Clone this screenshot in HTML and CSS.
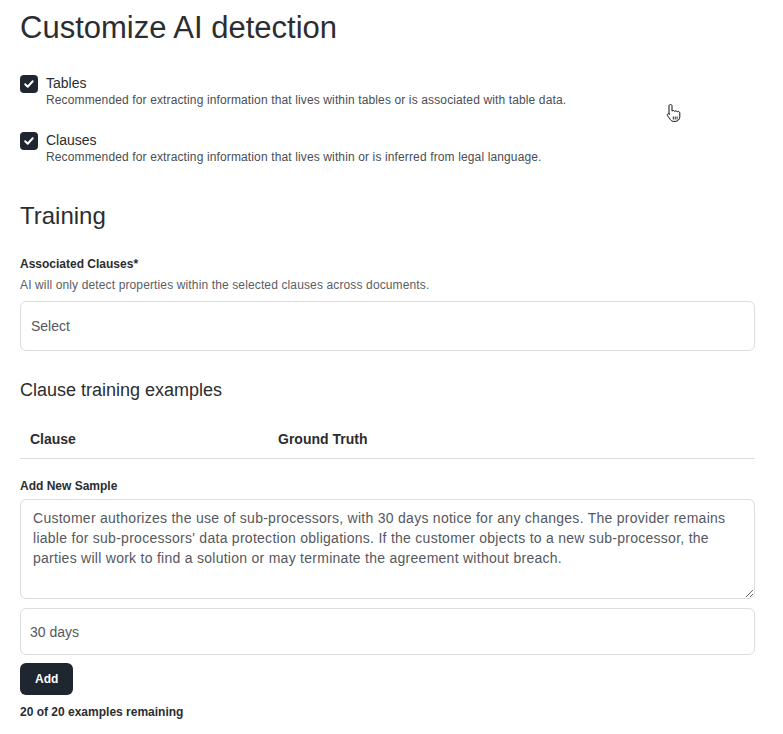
FILE: index.html
```html
<!DOCTYPE html>
<html>
<head>
  <title>Customize AI detection</title>
  <link rel="stylesheet" href="styles.css">
</head>
<body>

  <div class="page">
    <h1>Customize AI detection</h1>

    <div class="options">
      <label class="option">
        <span class="check">
          <svg width="12" height="12" viewBox="0 0 12 12"><path d="M2.2 6.3l2.5 2.4 5-5.4" fill="none" stroke="#fff" stroke-width="2" stroke-linecap="round" stroke-linejoin="round"/></svg>
        </span>
        <span class="option-text">
          <span class="option-title">Tables</span>
          <span class="option-desc">Recommended for extracting information that lives within tables or is associated with table data.</span>
        </span>
      </label>
      <label class="option">
        <span class="check">
          <svg width="12" height="12" viewBox="0 0 12 12"><path d="M2.2 6.3l2.5 2.4 5-5.4" fill="none" stroke="#fff" stroke-width="2" stroke-linecap="round" stroke-linejoin="round"/></svg>
        </span>
        <span class="option-text">
          <span class="option-title">Clauses</span>
          <span class="option-desc">Recommended for extracting information that lives within or is inferred from legal language.</span>
        </span>
      </label>
    </div>

    <h2>Training</h2>

    <div class="field-label">Associated Clauses*</div>
    <div class="field-help">AI will only detect properties within the selected clauses across documents.</div>
    <div class="select">Select</div>

    <h3>Clause training examples</h3>

    <div class="table-head">
      <div class="col-clause">Clause</div>
      <div class="col-truth">Ground Truth</div>
    </div>

    <div class="field-label sample-label">Add New Sample</div>
    <textarea class="sample-text">Customer authorizes the use of sub-processors, with 30 days notice for any changes. The provider remains liable for sub-processors' data protection obligations. If the customer objects to a new sub-processor, the parties will work to find a solution or may terminate the agreement without breach.</textarea>
    <input class="truth-input" type="text" value="30 days">
    <button class="add-btn">Add</button>
    <div class="remaining">20 of 20 examples remaining</div>
  </div>

  <svg class="cursor" width="16" height="20" viewBox="0 0 16 20">
    <path d="M4.5 1.5c.9 0 1.5.6 1.5 1.5v5.2c.3-.5.8-.7 1.3-.7.7 0 1.2.4 1.4 1 .3-.4.7-.6 1.2-.6.7 0 1.2.4 1.4 1 .3-.3.6-.4 1-.4.9 0 1.5.7 1.5 1.6v3.6c0 2.6-1.9 4.7-4.6 4.7H7.8c-1.4 0-2.5-.6-3.3-1.7L1.6 12.8c-.5-.7-.4-1.5.2-1.9.6-.4 1.3-.3 1.8.3L3 11.4V3c0-.9.6-1.5 1.5-1.5z" fill="#fff" stroke="#111" stroke-width="1"/>
    <path d="M7.3 13.5v3M9.2 13.5v3M11.1 13.5v3" stroke="#111" stroke-width="0.9"/>
  </svg>

</body>
</html>
```

FILE: styles.css
```css
body {
  margin: 0;
  font-family: "Liberation Sans", Arial, sans-serif;
  color: #2b2d31;
  background: #fff;
}
.page {
  padding: 8px 28px 20px 20px;
}
h1 {
  font-size: 31px;
  font-weight: 400;
  margin: 0 0 27px 0;
  line-height: 40px;
}
.options {
  display: flex;
  flex-direction: column;
  gap: 24px;
}
.option {
  display: flex;
  gap: 8px;
  align-items: flex-start;
}
.check {
  width: 18px;
  height: 18px;
  border-radius: 4px;
  background: #1f2630;
  display: flex;
  align-items: center;
  justify-content: center;
  flex-shrink: 0;
}
.option-text {
  display: flex;
  flex-direction: column;
}
.option-title {
  font-size: 14px;
  line-height: 17px;
}
.option-desc {
  font-size: 12px;
  letter-spacing: 0.13px;
  line-height: 16px;
  color: #4a4d53;
}
h2 {
  font-size: 24px;
  font-weight: 400;
  margin: 36px 0 25px 0;
  line-height: 30px;
}
.field-label {
  font-size: 12px;
  font-weight: 700;
  line-height: 16px;
  color: #2b2d31;
}
.field-help {
  font-size: 12px;
  letter-spacing: 0.13px;
  line-height: 16px;
  color: #5a5d63;
  margin-top: 5px;
}
.select {
  margin-top: 8px;
  height: 50px;
  box-sizing: border-box;
  border: 1px solid #dcdde1;
  border-radius: 6px;
  padding: 0 10px;
  display: flex;
  align-items: center;
  font-size: 14px;
  color: #55585e;
}
h3 {
  font-size: 18px;
  font-weight: 400;
  margin: 27px 0 0 0;
  line-height: 24px;
}
.table-head {
  display: flex;
  margin-top: 16px;
  padding: 13px 10px 11px 10px;
  border-bottom: 1px solid #dcdde1;
  font-size: 14px;
  font-weight: 700;
  line-height: 16px;
}
.col-clause {
  width: 248px;
}
.sample-label {
  margin-top: 19px;
}
.sample-text {
  display: block;
  margin-top: 5px;
  width: 100%;
  height: 100px;
  box-sizing: border-box;
  border: 1px solid #dcdde1;
  border-radius: 6px;
  padding: 8px 12px;
  font-family: "Liberation Sans", Arial, sans-serif;
  font-size: 14px;
  letter-spacing: 0.27px;
  line-height: 20px;
  color: #55585e;
  resize: vertical;
}
.truth-input {
  display: block;
  margin-top: 9px;
  width: 100%;
  height: 47px;
  box-sizing: border-box;
  border: 1px solid #dcdde1;
  border-radius: 6px;
  padding: 0 9px;
  font-family: "Liberation Sans", Arial, sans-serif;
  font-size: 14px;
  color: #55585e;
}
.add-btn {
  margin-top: 8px;
  height: 32px;
  padding: 0 15px;
  border: none;
  border-radius: 6px;
  background: #1f2630;
  color: #fff;
  font-family: "Liberation Sans", Arial, sans-serif;
  font-size: 12px;
  font-weight: 700;
}
.remaining {
  margin-top: 9px;
  font-size: 12px;
  font-weight: 700;
  line-height: 16px;
}
.cursor {
  position: absolute;
  left: 666px;
  top: 103px;
}
```
